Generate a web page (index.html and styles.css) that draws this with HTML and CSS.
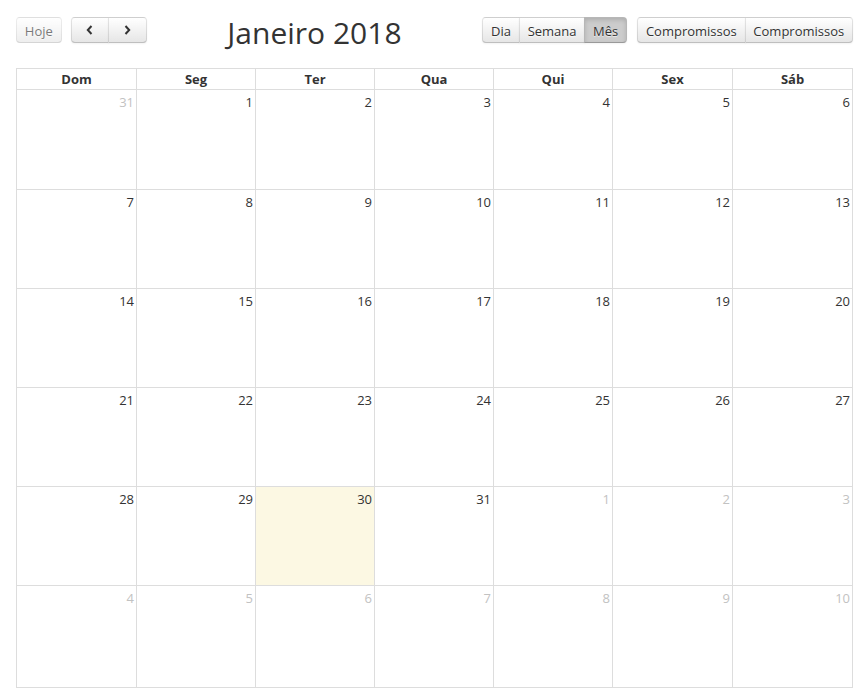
FILE: index.html
```html
<!DOCTYPE html>
<html lang="pt">
<head>
<meta charset="utf-8">
<title>Calendário</title>
<link rel="stylesheet" href="styles.css">
</head>
<body>
<div class="calendar">
  <div class="toolbar">
    <div class="tb-left">
      <button class="btn btn-single btn-disabled">Hoje</button>
      <div class="btn-group">
        <button class="btn btn-icon" aria-label="Anterior"><svg width="10" height="12" viewBox="0 0 10 12"><path d="M6.5 2 L2.8 6 L6.5 10" fill="none" stroke="#333" stroke-width="2"/></svg></button>
        <button class="btn btn-icon" aria-label="Próximo"><svg width="10" height="12" viewBox="0 0 10 12"><path d="M3.5 2 L7.2 6 L3.5 10" fill="none" stroke="#333" stroke-width="2"/></svg></button>
      </div>
    </div>
    <h2 class="title">Janeiro 2018</h2>
    <div class="tb-right">
      <div class="btn-group">
        <button class="btn">Dia</button>
        <button class="btn">Semana</button>
        <button class="btn btn-active">Mês</button>
      </div>
      <div class="btn-group">
        <button class="btn">Compromissos</button>
        <button class="btn">Compromissos</button>
      </div>
    </div>
  </div>

  <div class="grid">
    <div class="head">
      <div>Dom</div><div>Seg</div><div>Ter</div><div>Qua</div><div>Qui</div><div>Sex</div><div>Sáb</div>
    </div>
    <div class="week w1">
      <div class="day other">31</div><div class="day">1</div><div class="day">2</div><div class="day">3</div><div class="day">4</div><div class="day">5</div><div class="day">6</div>
    </div>
    <div class="week">
      <div class="day">7</div><div class="day">8</div><div class="day">9</div><div class="day">10</div><div class="day">11</div><div class="day">12</div><div class="day">13</div>
    </div>
    <div class="week">
      <div class="day">14</div><div class="day">15</div><div class="day">16</div><div class="day">17</div><div class="day">18</div><div class="day">19</div><div class="day">20</div>
    </div>
    <div class="week">
      <div class="day">21</div><div class="day">22</div><div class="day">23</div><div class="day">24</div><div class="day">25</div><div class="day">26</div><div class="day">27</div>
    </div>
    <div class="week">
      <div class="day">28</div><div class="day">29</div><div class="day today">30</div><div class="day">31</div><div class="day other">1</div><div class="day other">2</div><div class="day other">3</div>
    </div>
    <div class="week w6">
      <div class="day other">4</div><div class="day other">5</div><div class="day other">6</div><div class="day other">7</div><div class="day other">8</div><div class="day other">9</div><div class="day other">10</div>
    </div>
  </div>
</div>
</body>
</html>
```
FILE: styles.css
```css
html, body {
  margin: 0;
  background: #fff;
}
body {
  padding: 17px 14px 0 16px;
  font-family: "Open Sans", "Liberation Sans", sans-serif;
  font-size: 13px;
  color: #333;
}
.toolbar {
  display: flex;
  align-items: flex-start;
  margin-bottom: 19px;
}
.tb-left, .tb-right {
  display: flex;
  gap: 9px;
}
.tb-right {
  gap: 10px;
}
.title {
  flex: 1;
  margin: 0;
  text-align: center;
  font-size: 30px;
  font-weight: 400;
  line-height: 32px;
  color: #333;
}
.btn-group {
  display: flex;
}
.btn {
  box-sizing: border-box;
  height: 26px;
  padding: 2px 7.8px 0;
  margin: 0;
  font-family: inherit;
  font-size: 13px;
  color: #333;
  background-color: #f5f5f5;
  background-image: linear-gradient(to bottom, #fff, #e6e6e6);
  border: 1px solid;
  border-color: rgba(0,0,0,.1) rgba(0,0,0,.1) rgba(0,0,0,.25);
  text-shadow: 0 1px 1px rgba(255,255,255,.75);
  box-shadow: inset 0 1px 0 rgba(255,255,255,.2), 0 1px 2px rgba(0,0,0,.05);
  border-radius: 0;
  white-space: nowrap;
  cursor: pointer;
}
.btn-group .btn + .btn {
  margin-left: -1px;
}
.btn-group .btn:first-child {
  border-radius: 4px 0 0 4px;
}
.btn-group .btn:last-child {
  border-radius: 0 4px 4px 0;
}
.btn-single {
  border-radius: 4px;
}
.btn-icon {
  width: 38.5px;
  padding-top: 0;
  display: flex;
  align-items: center;
  justify-content: center;
}
.btn-active {
  background-color: #ccc;
  background-image: none;
  box-shadow: inset 0 2px 4px rgba(0,0,0,.15), 0 1px 2px rgba(0,0,0,.05);
}
.btn-disabled {
  opacity: .65;
  box-shadow: none;
  cursor: default;
}

.grid {
  border-top: 1px solid #ddd;
  border-left: 1px solid #ddd;
}
.head, .week {
  display: grid;
  grid-template-columns: 120px 119px 119px 119px 119px 120px 120px;
}
.head > div {
  height: 20px;
  line-height: 20px;
  text-align: center;
  font-weight: 700;
  border-right: 1px solid #ddd;
  border-bottom: 1px solid #ddd;
}
.week {
  height: 99px;
}
.week.w1 {
  height: 100px;
}
.week.w6 {
  height: 102px;
}
.day {
  border-right: 1px solid #ddd;
  border-bottom: 1px solid #ddd;
  text-align: right;
  padding: 3px 2px 0 0;
  line-height: 18px;
}
.day.other {
  color: #c2c2c2;
}
.day.today {
  background: #fcf8e3;
}
```
